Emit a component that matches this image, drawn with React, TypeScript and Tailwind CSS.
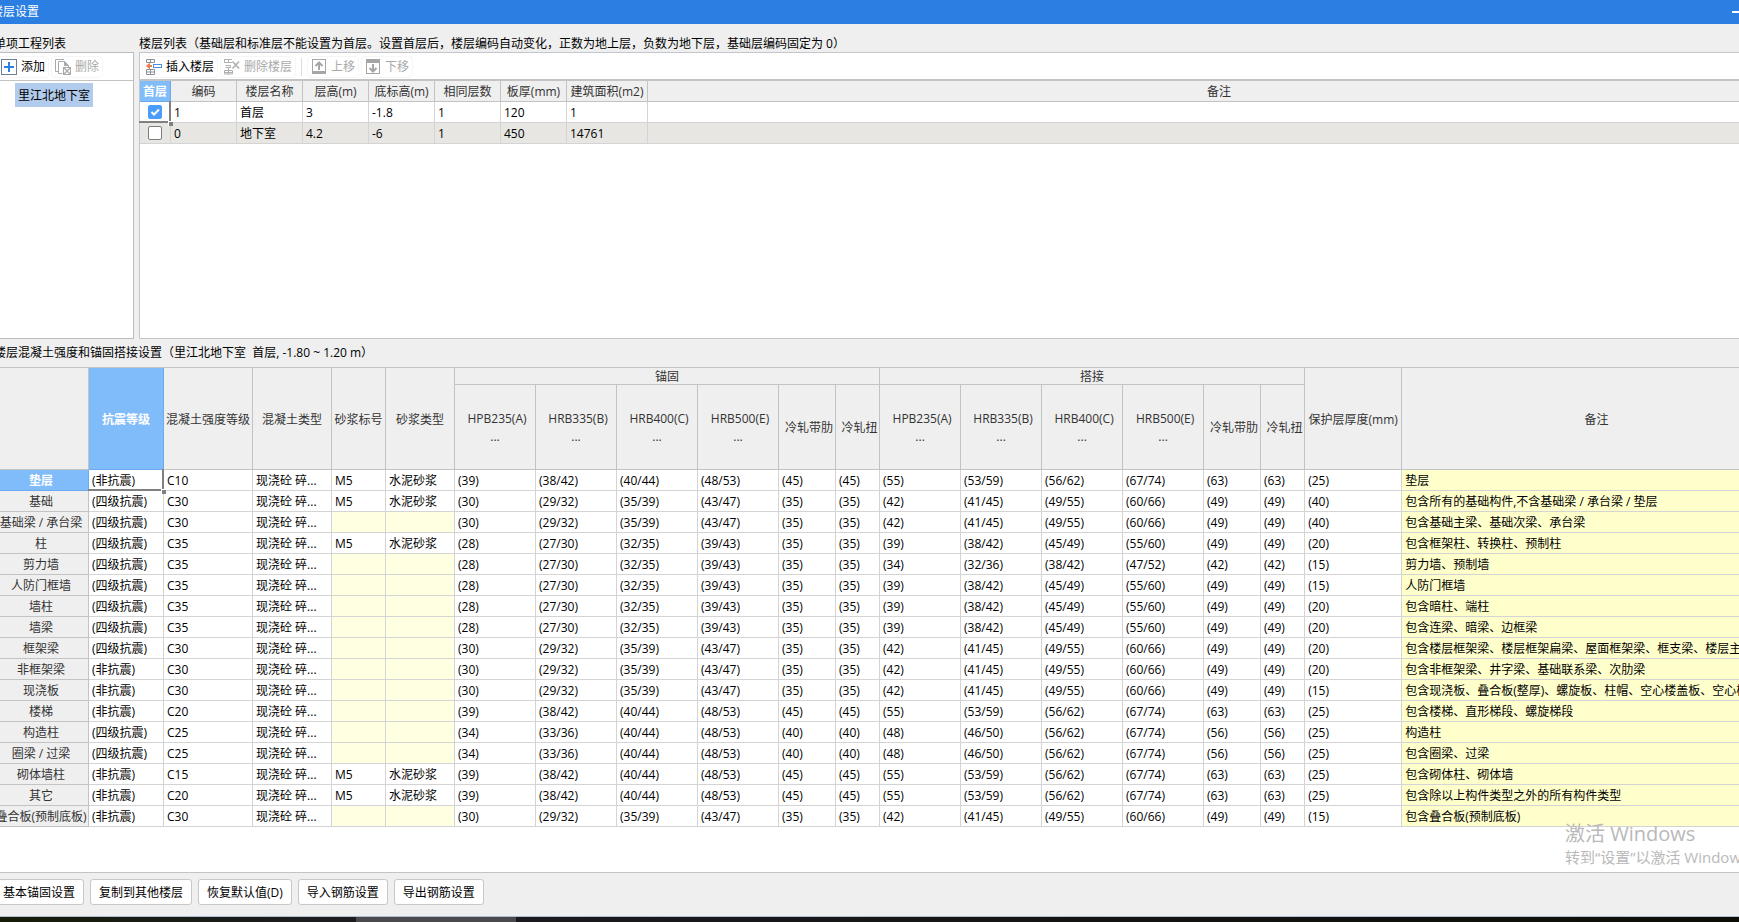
import * as React from "react";

type Floor = {
  code: string;
  name: string;
  height: string;
  elevation: string;
  same: string;
  slab: string;
  area: string;
};

const floors: Floor[] = [
  { code: "1", name: "首层", height: "3", elevation: "-1.8", same: "1", slab: "120", area: "1" },
  { code: "0", name: "地下室", height: "4.2", elevation: "-6", same: "1", slab: "450", area: "14761" },
];

const floorHeads = ["编码", "楼层名称", "层高(m)", "底标高(m)", "相同层数", "板厚(mm)", "建筑面积(m2)", "备注"];

const QUAKE = "(四级抗震)";
const NONE = "(非抗震)";

// anchor / lap lengths: A, B, C, E, cold-rolled ribbed, cold-rolled twisted
const anchor: Record<string, string[]> = {
  a39: ["(39)", "(38/42)", "(40/44)", "(48/53)", "(45)", "(45)"],
  a34: ["(34)", "(33/36)", "(40/44)", "(48/53)", "(40)", "(40)"],
  a30: ["(30)", "(29/32)", "(35/39)", "(43/47)", "(35)", "(35)"],
  a28: ["(28)", "(27/30)", "(32/35)", "(39/43)", "(35)", "(35)"],
};

const lap: Record<string, string[]> = {
  l55: ["(55)", "(53/59)", "(56/62)", "(67/74)", "(63)", "(63)"],
  l48: ["(48)", "(46/50)", "(56/62)", "(67/74)", "(56)", "(56)"],
  l42: ["(42)", "(41/45)", "(49/55)", "(60/66)", "(49)", "(49)"],
  l39: ["(39)", "(38/42)", "(45/49)", "(55/60)", "(49)", "(49)"],
  l34: ["(34)", "(32/36)", "(38/42)", "(47/52)", "(42)", "(42)"],
};

type Member = {
  name: string;
  quake: string;
  grade: string;
  mortar?: boolean;
  anchor: string[];
  lap: string[];
  cover: string;
  note: string;
};

const members: Member[] = [
  { name: "垫层", quake: NONE, grade: "C10", mortar: true, anchor: anchor.a39, lap: lap.l55, cover: "(25)", note: "垫层" },
  { name: "基础", quake: QUAKE, grade: "C30", mortar: true, anchor: anchor.a30, lap: lap.l42, cover: "(40)", note: "包含所有的基础构件,不含基础梁 / 承台梁 / 垫层" },
  { name: "基础梁 / 承台梁", quake: QUAKE, grade: "C30", anchor: anchor.a30, lap: lap.l42, cover: "(40)", note: "包含基础主梁、基础次梁、承台梁" },
  { name: "柱", quake: QUAKE, grade: "C35", mortar: true, anchor: anchor.a28, lap: lap.l39, cover: "(20)", note: "包含框架柱、转换柱、预制柱" },
  { name: "剪力墙", quake: QUAKE, grade: "C35", anchor: anchor.a28, lap: lap.l34, cover: "(15)", note: "剪力墙、预制墙" },
  { name: "人防门框墙", quake: QUAKE, grade: "C35", anchor: anchor.a28, lap: lap.l39, cover: "(15)", note: "人防门框墙" },
  { name: "墙柱", quake: QUAKE, grade: "C35", anchor: anchor.a28, lap: lap.l39, cover: "(20)", note: "包含暗柱、端柱" },
  { name: "墙梁", quake: QUAKE, grade: "C35", anchor: anchor.a28, lap: lap.l39, cover: "(20)", note: "包含连梁、暗梁、边框梁" },
  { name: "框架梁", quake: QUAKE, grade: "C30", anchor: anchor.a30, lap: lap.l42, cover: "(20)", note: "包含楼层框架梁、楼层框架扁梁、屋面框架梁、框支梁、楼层主肋梁" },
  { name: "非框架梁", quake: NONE, grade: "C30", anchor: anchor.a30, lap: lap.l42, cover: "(20)", note: "包含非框架梁、井字梁、基础联系梁、次肋梁" },
  { name: "现浇板", quake: NONE, grade: "C30", anchor: anchor.a30, lap: lap.l42, cover: "(15)", note: "包含现浇板、叠合板(整厚)、螺旋板、柱帽、空心楼盖板、空心楼盖" },
  { name: "楼梯", quake: NONE, grade: "C20", anchor: anchor.a39, lap: lap.l55, cover: "(25)", note: "包含楼梯、直形梯段、螺旋梯段" },
  { name: "构造柱", quake: QUAKE, grade: "C25", anchor: anchor.a34, lap: lap.l48, cover: "(25)", note: "构造柱" },
  { name: "圈梁 / 过梁", quake: QUAKE, grade: "C25", anchor: anchor.a34, lap: lap.l48, cover: "(25)", note: "包含圈梁、过梁" },
  { name: "砌体墙柱", quake: NONE, grade: "C15", mortar: true, anchor: anchor.a39, lap: lap.l55, cover: "(25)", note: "包含砌体柱、砌体墙" },
  { name: "其它", quake: NONE, grade: "C20", mortar: true, anchor: anchor.a39, lap: lap.l55, cover: "(25)", note: "包含除以上构件类型之外的所有构件类型" },
  { name: "叠合板(预制底板)", quake: NONE, grade: "C30", anchor: anchor.a30, lap: lap.l42, cover: "(15)", note: "包含叠合板(预制底板)" },
];

const steels = ["HPB235(A)", "HRB335(B)", "HRB400(C)", "HRB500(E)", "冷轧带肋", "冷轧扭"];

const HEAD = "border-r border-b border-[#c3c3c3] bg-[#efefef] px-0 pt-0.5 pb-0 text-center font-normal text-[#333]";
const HEAD_ON = "border-r border-b border-[#6caaf0] bg-[#80bbfa] px-0 pt-0.5 pb-0 text-center font-bold text-white";
const CELL = "border-r border-b border-[#d4d4d4] px-[3px] pt-0.5 pb-0 leading-[18px]";

function AddIcon() {
  return (
    <svg width="16" height="16" viewBox="0 0 16 16" fill="none" aria-hidden="true">
      <rect x="0.5" y="0.5" width="15" height="15" fill="#fff" stroke="#6c7f95" />
      <path d="M8 3v10M3 8h10" stroke="#2b80e0" strokeWidth="2" />
    </svg>
  );
}

function RemoveIcon() {
  return (
    <svg width="16" height="16" viewBox="0 0 16 16" fill="none" stroke="#a9a9a9" aria-hidden="true">
      <path d="M3 12.5H0.5V0.5H9" />
      <path d="M7.500 14.500H3.500V2.500H9.500L13.500 6.500V8" />
      <path d="M9.500 2.500V6.500H13.500Z" fill="#a9a9a9" />
      <rect x="8.500" y="8.500" width="7" height="7" />
      <path d="M9 9l6 6M15 9l-6 6" strokeWidth="1.300" />
    </svg>
  );
}

function InsertFloorIcon() {
  return (
    <svg width="16" height="16" viewBox="0 0 16 16" fill="none" aria-hidden="true">
      <path d="M0.500 0.500H8.500V3.500H0.500ZM4.500 0.500V3.500M0.500 10.500H8.500V15.500H0.500ZM0.500 13H8.500M4.500 10.500V15.500" stroke="#8c9299" />
      <path d="M6 7H2" stroke="#f47a4b" strokeWidth="2" />
      <path d="M0 7L4 3.500V10.500Z" fill="#f47a4b" />
      <rect x="7.500" y="5.500" width="8" height="3" fill="#fff" stroke="#4a8fdc" />
    </svg>
  );
}

function RemoveFloorIcon() {
  return (
    <svg width="16" height="16" viewBox="0 0 16 16" fill="none" stroke="#b0b0b0" aria-hidden="true">
      <path d="M0.500 0.500H8M0.500 0.500V3.500H8M4.500 0.500V3.500M1.500 6.500H6.500V8.500H1.500M0.500 11.500H8.500V15H0.500ZM4.500 9V15.500M0.500 13.500H8.500" />
      <path d="M8.500 2.500l6.500 7M15 2.500l-6.500 7" strokeWidth="1.600" />
    </svg>
  );
}

function MoveIcon({ down }: { down?: boolean }) {
  return (
    <svg width="16" height="16" viewBox="0 0 16 16" fill="none" stroke="#a6a6a6" aria-hidden="true">
      <rect x="1.500" y="0.500" width="13" height="14" />
      {down ? (
        <>
          <path d="M1 2h14" strokeWidth="4" />
          <path d="M8 5v7M4.500 9L8 12.500L11.500 9" strokeWidth="2" />
        </>
      ) : (
        <>
          <path d="M1 13.500h14" strokeWidth="3" />
          <path d="M8 11V4M4.500 7L8 3.500L11.500 7" strokeWidth="2" />
        </>
      )}
    </svg>
  );
}

function ToolButton({ icon, label, disabled }: { icon: React.ReactNode; label: string; disabled?: boolean }) {
  return (
    <button
      type="button"
      disabled={disabled}
      className="flex h-[22px] items-center gap-1 rounded-sm border border-[#f6f6f6] px-[3px] disabled:text-[#a9a9a9]"
    >
      {icon}
      {label}
    </button>
  );
}

// frame of the current cell, with its fill handle
function CellFocus() {
  return (
    <>
      <span className="pointer-events-none absolute -inset-px border-r-2 border-b-2 border-[#808080]" />
      <span className="pointer-events-none absolute -right-[3px] -bottom-[4px] z-10 size-[5px] border-t border-l border-white bg-[#808080]" />
    </>
  );
}

function FloorTable() {
  const [first, setFirst] = React.useState("1");

  return (
    <table className="w-full table-fixed border-separate border-spacing-0 whitespace-nowrap">
      <colgroup>
        <col className="w-[31px]" />
        <col className="w-[66px]" />
        <col className="w-[66px]" />
        <col className="w-[66px]" />
        <col className="w-[66px]" />
        <col className="w-[66px]" />
        <col className="w-[66px]" />
        <col className="w-[81px]" />
        <col />
      </colgroup>
      <thead>
        <tr className="h-[21px] leading-[18px]">
          <th className={HEAD_ON}>首层</th>
          {floorHeads.map((h) => <th key={h} className={HEAD}>{h}</th>)}
        </tr>
      </thead>
      <tbody>
        {floors.map((f, i) => (
          <tr key={f.code} className={i % 2 ? "h-[21px] bg-[#e7e6e2]" : "h-[21px]"}>
            <td className="relative border-r border-b border-[#d4d4d4] p-0">
              <span className="grid h-5 place-items-center">
                <input
                  type="checkbox"
                  aria-label={f.name}
                  checked={first === f.code}
                  onChange={() => setFirst(f.code)}
                  className="peer col-start-1 row-start-1 size-[14px] appearance-none rounded-xs border border-[#7d7d7d] bg-white checked:border-[#4a9dfb] checked:bg-[#4a9dfb]"
                />
                <svg width="14" height="14" viewBox="0 0 14 14" fill="none" className="pointer-events-none invisible col-start-1 row-start-1 peer-checked:visible" aria-hidden="true">
                  <path d="M3.500 7L6 9.500L11 4.500" stroke="#fff" strokeWidth="2" />
                </svg>
              </span>
              {i === 0 && <CellFocus />}
            </td>
            <td className={CELL}>{f.code}</td>
            <td className={CELL}>{f.name}</td>
            <td className={CELL}>{f.height}</td>
            <td className={CELL}>{f.elevation}</td>
            <td className={CELL}>{f.same}</td>
            <td className={CELL}>{f.slab}</td>
            <td className={CELL}>{f.area}</td>
            <td className={CELL}></td>
          </tr>
        ))}
      </tbody>
    </table>
  );
}

function SteelCols() {
  return (
    <>
      <col className="w-[81px]" />
      <col className="w-[81px]" />
      <col className="w-[81px]" />
      <col className="w-[81px]" />
      <col className="w-[57px]" />
      <col className="w-[44px]" />
    </>
  );
}

function SteelHeads() {
  return (
    <>
      {steels.map((s) => (
        <th key={s} className={HEAD}>
          <span className="block pl-1 leading-[18px]">{s}</span>
          {s.startsWith("H") && <span className="block leading-[18px]">...</span>}
        </th>
      ))}
    </>
  );
}

function MemberTable() {
  return (
    <table className="w-full table-fixed border-separate border-spacing-0 whitespace-nowrap">
      <colgroup>
        <col className="w-[95px]" />
        <col className="w-[75px]" />
        <col className="w-[89px]" />
        <col className="w-[79px]" />
        <col className="w-[54px]" />
        <col className="w-[69px]" />
        <SteelCols />
        <SteelCols />
        <col className="w-[97px]" />
        <col />
      </colgroup>
      <thead>
        <tr className="h-[17px] leading-[14px]">
          <th rowSpan={2} className={HEAD}></th>
          <th rowSpan={2} className={HEAD_ON}>抗震等级</th>
          <th rowSpan={2} className={HEAD}>混凝土强度等级</th>
          <th rowSpan={2} className={HEAD}>混凝土类型</th>
          <th rowSpan={2} className={HEAD}>砂浆标号</th>
          <th rowSpan={2} className={HEAD}>砂浆类型</th>
          <th colSpan={6} className={HEAD}>锚固</th>
          <th colSpan={6} className={HEAD}>搭接</th>
          <th rowSpan={2} className={HEAD}>保护层厚度(mm)</th>
          <th rowSpan={2} className={HEAD}>备注</th>
        </tr>
        <tr className="h-[85px]">
          <SteelHeads />
          <SteelHeads />
        </tr>
      </thead>
      <tbody>
        {members.map((m, i) => (
          <tr key={m.name} className="h-[21px] leading-[18px]">
            <th className={i === 0 ? HEAD_ON : HEAD}>{m.name}</th>
            <td className={`relative ${CELL}`}>
              {m.quake}
              {i === 0 && <CellFocus />}
            </td>
            <td className={CELL}>{m.grade}</td>
            <td className={CELL}>现浇砼 碎...</td>
            {m.mortar ? (
              <>
                <td className={CELL}>M5</td>
                <td className={CELL}>水泥砂浆</td>
              </>
            ) : (
              <>
                <td className={`bg-[#ffffe1] ${CELL}`}></td>
                <td className={`bg-[#ffffe1] ${CELL}`}></td>
              </>
            )}
            {[...m.anchor, ...m.lap].map((v, j) => <td key={j} className={CELL}>{v}</td>)}
            <td className={CELL}>{m.cover}</td>
            <td className={`overflow-hidden bg-[#ffffcc] ${CELL}`}>{m.note}</td>
          </tr>
        ))}
      </tbody>
    </table>
  );
}

const actions = ["基本锚固设置", "复制到其他楼层", "恢复默认值(D)", "导入钢筋设置", "导出钢筋设置"];

export default function App() {
  return (
    <div className="flex h-screen flex-col overflow-hidden bg-black font-['Open_Sans','Noto_Sans_CJK_SC',sans-serif] text-xs text-black">
      {/* the dialog is a little wider than the screen and hangs over both sides */}
      <div className="-mr-[59px] -ml-3 flex min-h-0 flex-1 flex-col border-b border-[#b3bcd0] bg-[#efefef]">
        <header className="flex h-6 items-center justify-between bg-[#2c7fe2] pr-[54px] pl-[3px] text-white">
          <h1>楼层设置</h1>
          <button type="button" aria-label="最小化" className="flex h-6 items-center">
            <span className="h-[2px] w-3 bg-white" />
          </button>
        </header>

        <div className="flex gap-[5px] px-1.5">
          <section className="flex w-[140px] flex-col">
            <h2 className="h-7 pt-2.5 leading-5">单项工程列表</h2>
            <div className="h-[287px] border border-[#b9bcc1] bg-white">
              <div className="flex h-7 items-center gap-0.5 border-b border-[#c3c3c3] px-0.5">
                <ToolButton icon={<AddIcon />} label="添加" />
                <ToolButton icon={<RemoveIcon />} label="删除" disabled />
              </div>
              <ul className="pt-0.5 pl-5">
                <li className="w-fit bg-[#b1cbec] px-[3px] pt-0.5 leading-[22px]">里江北地下室</li>
              </ul>
            </div>
          </section>

          <section className="flex min-w-0 flex-1 flex-col">
            <h2 className="h-7 pt-2.5 leading-5">
              楼层列表（基础层和标准层不能设置为首层。设置首层后，楼层编码自动变化，正数为地上层，负数为地下层，基础层编码固定为 0）
            </h2>
            <div className="h-[287px] border border-[#c3c6cb] bg-white">
              <div className="flex h-7 items-center gap-0.5 border-b-2 border-[#c3c3c3] px-0.5 pt-0.5">
                <ToolButton icon={<InsertFloorIcon />} label="插入楼层" />
                <ToolButton icon={<RemoveFloorIcon />} label="删除楼层" disabled />
                <span className="mx-[3px] h-[18px] w-px bg-[#dcdcdc]" />
                <ToolButton icon={<MoveIcon />} label="上移" disabled />
                <ToolButton icon={<MoveIcon down />} label="下移" disabled />
              </div>
              <FloorTable />
            </div>
          </section>
        </div>

        <section className="flex min-h-0 flex-1 flex-col">
          <h2 className="h-7 px-1.5 pt-1 leading-5 whitespace-pre">楼层混凝土强度和锚固搭接设置（里江北地下室  首层, -1.80 ~ 1.20 m）</h2>
          <div className="relative mx-1.5 flex-1 border-t border-b border-[#c3c3c3] bg-white">
            <MemberTable />
            <div className="pointer-events-none absolute top-[453px] left-[calc(100%-227px)] whitespace-nowrap text-[#b9b9b9]">
              <p className="text-xl leading-[26px]">激活 Windows</p>
              <p className="text-[15px] leading-5">转到“设置”以激活 Windows。</p>
            </div>
          </div>
        </section>

        <footer className="flex h-[43px] gap-1.5 px-1.5 pt-1.5">
          {actions.map((a) => (
            <button key={a} type="button" className="h-[26px] rounded-[3px] border border-[#c8c8c8] bg-white px-2 pt-px">{a}</button>
          ))}
        </footer>
      </div>

      {/* sliver of the taskbar under the dialog */}
      <div className="flex h-[5px]">
        <span className="w-[356px] bg-linear-to-r from-[#171c08] to-[#1c1c20]" />
        <span className="w-[160px] bg-[#4a4a4c]" />
        <span className="flex-1 bg-linear-to-r from-[#1a1a1e] to-[#0c0e06]" />
      </div>
    </div>
  );
}
